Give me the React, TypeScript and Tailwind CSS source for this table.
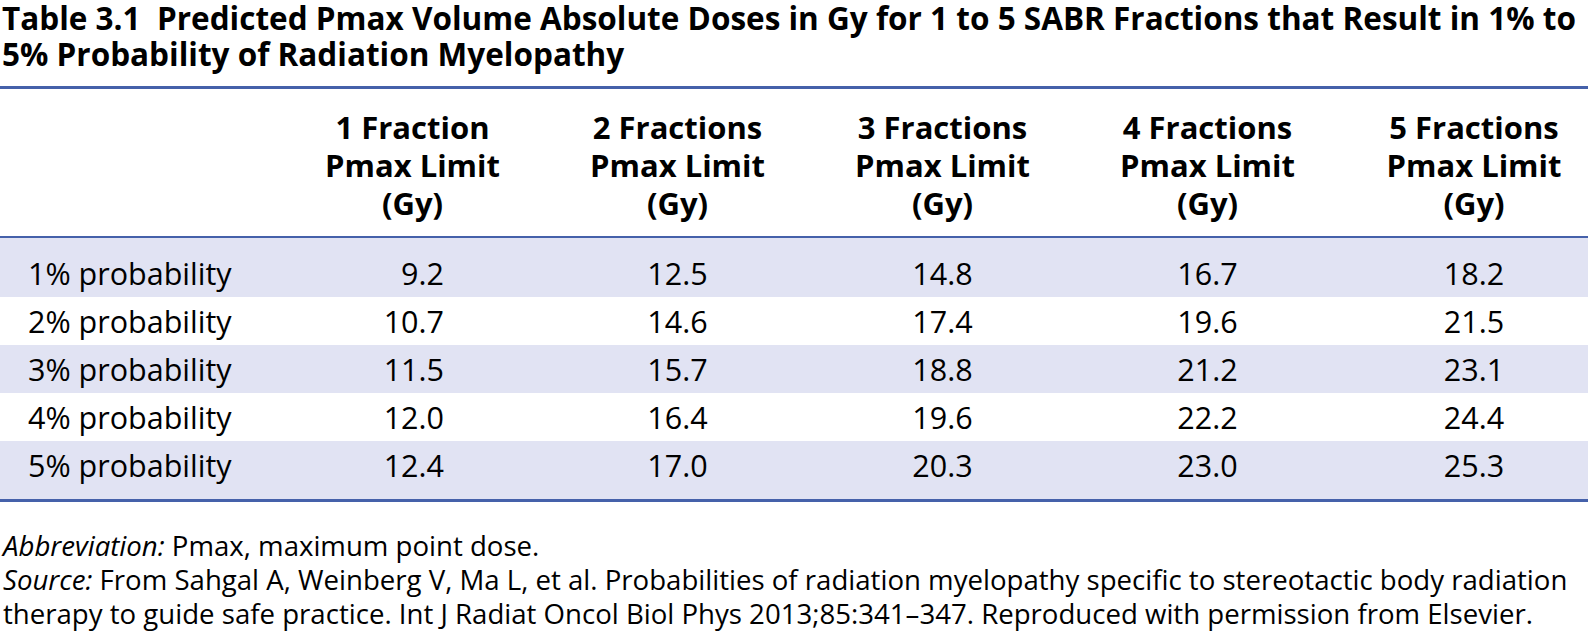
const rows = [
  { label: "1% probability", values: ["9.2", "12.5", "14.8", "16.7", "18.2"] },
  { label: "2% probability", values: ["10.7", "14.6", "17.4", "19.6", "21.5"] },
  { label: "3% probability", values: ["11.5", "15.7", "18.8", "21.2", "23.1"] },
  { label: "4% probability", values: ["12.0", "16.4", "19.6", "22.2", "24.4"] },
  { label: "5% probability", values: ["12.4", "17.0", "20.3", "23.0", "25.3"] },
];

const headers = ["1 Fraction", "2 Fractions", "3 Fractions", "4 Fractions", "5 Fractions"];

const grid = "grid grid-cols-[280px_265px_265px_265px_265px_248px]";

export default function App() {
  return (
    <div className="w-[1588px] h-[636px] overflow-hidden bg-white text-black font-['Open_Sans',sans-serif]">
      <h1 className="pl-[2px] text-[31.5px] font-bold leading-[36px] whitespace-nowrap">
        Table 3.1&nbsp; Predicted Pmax Volume Absolute Doses in Gy for 1 to 5 SABR Fractions that Result in 1% to
        <br />
        5% Probability of Radiation Myelopathy
      </h1>

      <div className="mt-[14px] border-t-[3px] border-b-[3px] border-[#4561aa]">
        <div className={`${grid} border-b-2 border-[#4561aa] pt-[19px] pb-[14px]`}>
          <div />
          {headers.map((h, i) => (
            <div
              key={h}
              className={`text-center text-[31px] font-bold leading-[38px] ${i === 4 ? "pl-[20px]" : ""}`}
            >
              {h}
              <br />
              Pmax Limit
              <br />
              (Gy)
            </div>
          ))}
        </div>

        {rows.map((r, ri) => (
          <div
            key={r.label}
            className={`${grid} text-[30.5px] leading-[48px] ${ri % 2 === 0 ? "bg-[#e1e3f3]" : "bg-white"} ${
              ri === 0 ? "pt-[11px]" : ""
            } ${ri === rows.length - 1 ? "pb-[10px]" : ""}`}
          >
            <div className="pl-[28px]">{r.label}</div>
            {r.values.map((v, i) => (
              <div key={i} className={`flex justify-center ${i === 4 ? "pl-[20px]" : ""}`}>
                <span className={i === 0 ? "w-[63px] text-right" : ""}>{v}</span>
              </div>
            ))}
          </div>
        ))}
      </div>

      <div className="mt-[26px] pl-[3px] text-[27.6px] leading-[34px] whitespace-nowrap">
        <p>
          <i>Abbreviation:</i> Pmax, maximum point dose.
        </p>
        <p>
          <i>Source:</i> From Sahgal A, Weinberg V, Ma L, et al. Probabilities of radiation myelopathy specific to stereotactic body radiation
          <br />
          therapy to guide safe practice. Int J Radiat Oncol Biol Phys 2013;85:341–347. Reproduced with permission from Elsevier.
        </p>
      </div>
    </div>
  );
}
